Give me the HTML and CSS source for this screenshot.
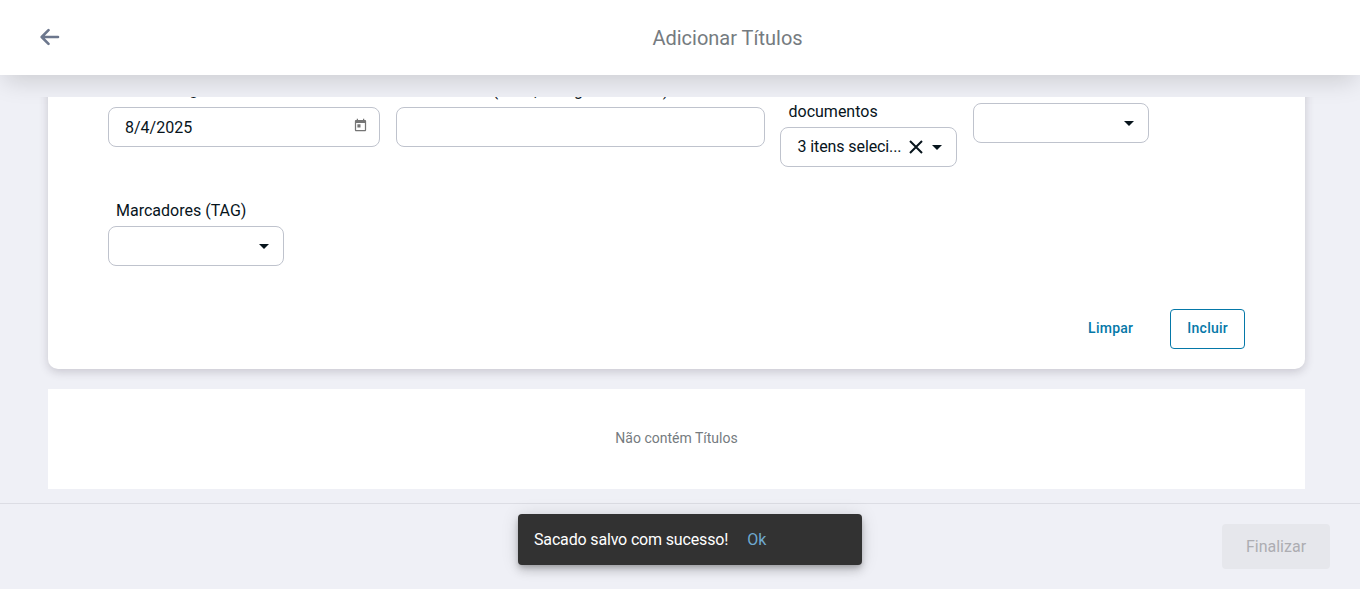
FILE: index.html
```html
<!DOCTYPE html>
<html lang="pt-BR">
<head>
<meta charset="utf-8">
<title>Adicionar Títulos</title>
<link rel="stylesheet" href="styles.css">
</head>
<body>
<div class="app">
  <header class="header">
    <svg class="back" viewBox="0 0 20 18"><path d="M18 9H2M8.5 2.2L1.7 9l6.8 6.8"/></svg>
    <h1 class="title">Adicionar Títulos</h1>
  </header>
  <main class="content">
    <section class="card">
      <div class="fields">
        <div class="field date">
          <label class="label">Data de registro</label>
          <div class="input"><span>8/4/2025</span>
            <svg class="calendar" viewBox="0 0 24 24"><path d="M19 3h-1V1h-2v2H8V1H6v2H5c-1.11 0-1.99.9-1.99 2L3 19c0 1.1.89 2 2 2h14c1.1 0 2-.9 2-2V5c0-1.1-.9-2-2-2zm0 16H5V8h14v11zM7 10h5v5H7z"/></svg>
          </div>
        </div>
        <div class="field ident">
          <label class="label"><span class="tight">Identificador</span> (Valor, Código de barras)</label>
          <div class="input"></div>
        </div>
        <div class="field docs">
          <label class="label">Tipos de documentos</label>
          <div class="input select"><span class="value">3 itens seleci...</span>
            <svg class="clear" viewBox="0 0 14 14"><path d="M1 1l12 12M13 1L1 13"/></svg>
            <svg class="caret" viewBox="0 0 10 5"><path d="M0 0h10L5 5z"/></svg>
          </div>
        </div>
        <div class="field category">
          <label class="label">Categoria</label>
          <div class="input select"><svg class="caret" viewBox="0 0 10 5"><path d="M0 0h10L5 5z"/></svg></div>
        </div>
      </div>
      <div class="field tags">
        <label class="label">Marcadores (TAG)</label>
        <div class="input select"><svg class="caret" viewBox="0 0 10 5"><path d="M0 0h10L5 5z"/></svg></div>
      </div>
      <div class="actions">
        <button class="button">Limpar</button>
        <button class="button outlined">Incluir</button>
      </div>
    </section>
    <section class="empty">Não contém Títulos</section>
  </main>
  <footer class="footer"><button class="finish" disabled>Finalizar</button></footer>
  <div class="snackbar"><span>Sacado salvo com sucesso!</span><a class="ok">Ok</a></div>
</div>
</body>
</html>
```
FILE: styles.css
```css
* { box-sizing: border-box; }
body { margin: 0; font-family: Roboto, sans-serif; font-size: 16px; color: #07141c; background: #eff0f6; }
button { font-family: inherit; }
.app { display: flex; flex-direction: column; height: 589px; position: relative; overflow: hidden; }
.header { display: flex; align-items: center; height: 75px; flex: none; padding-left: 40px; background: #fff; box-shadow: 0 10px 24px -4px rgba(0, 0, 0, .15); }
.back { width: 20px; height: 18px; flex: none; margin-top: -1px; fill: none; stroke: #6c778d; stroke-width: 2.6; stroke-linecap: round; stroke-linejoin: round; }
.title { flex: 1; margin: 0; padding-left: 35px; text-align: center; font-size: 20px; font-weight: 400; line-height: 28px; color: #757b80; }
.content { height: 406px; flex: none; margin-top: 22px; padding: 0 55px 0 48px; overflow: hidden; }
.card { height: 312px; margin-top: -40px; padding: 22px 60px 20px; display: flex; flex-direction: column; background: #fff; border-radius: 10px; box-shadow: 0 3px 10px rgba(50, 40, 60, .2); }
.fields { display: flex; align-items: flex-start; height: 121px; }
.field { display: flex; flex-direction: column; flex: none; }
.label { padding-left: 8px; line-height: 20px; margin-bottom: 6px; }
.input { display: flex; align-items: center; height: 40px; padding: 0 11.5px 0 16px; background: #fff; border: 1px solid #bfc3cd; border-radius: 8px; }
.date { width: 272px; margin-right: 16px; padding-top: 1px; }
.date .label { padding-left: 9px; margin-bottom: 7px; }
.ident { width: 369px; margin-right: 15px; padding-top: 2px; }
.tight { letter-spacing: -.4px; }
.docs { width: 177px; margin-right: 16px; margin-top: -4px; }
.docs .label { width: 110px; padding: 1px 0 0 8.5px; line-height: 24px; margin-bottom: 3px; }
.category { width: 176px; margin-top: -2px; }
.tags { width: 176px; }
.tags .label { margin: 1px 0 5px; }
.calendar { width: 15px; height: 15px; margin: -3px 0 0 auto; fill: #757575; }
.caret { width: 10px; height: 5px; margin-left: auto; fill: #07141c; }
.select { padding-right: 14.5px; }
.clear { width: 14px; height: 14px; margin-left: 8px; fill: none; stroke: #07141c; stroke-width: 2; }
.value { white-space: nowrap; letter-spacing: -.1px; padding: 0 0 2px .5px; }
.actions { display: flex; justify-content: flex-end; gap: 20px; margin-top: auto; }
.button { height: 40px; padding: 0 16px 2px; border: 1px solid transparent; border-radius: 4px; background: none; color: #0578a8; font-size: 14px; font-weight: 500; letter-spacing: .25px; }
.outlined { border-color: #0578a8; }
.empty { display: flex; align-items: center; justify-content: center; height: 100px; margin-top: 20px; padding-bottom: 2px; background: #fff; color: #757b80; font-size: 14px; }
.footer { display: flex; flex: 1; justify-content: flex-end; align-items: flex-start; padding: 20px 30px 0 0; border-top: 1px solid #dcdde4; }
.finish { width: 108px; height: 45px; border: 0; border-radius: 4px; background: #e6e7ec; color: #adadb2; font-size: 16px; }
.snackbar { position: absolute; left: 518px; top: 514px; display: flex; align-items: center; gap: 19px; width: 344px; height: 51px; padding: 0 16px; border-radius: 4px; background: #323232; color: #fff; letter-spacing: -.16px; box-shadow: 0 3px 5px -1px rgba(0,0,0,.2), 0 6px 10px rgba(0,0,0,.14), 0 1px 18px rgba(0,0,0,.12); }
.ok { color: #6fa9cf; letter-spacing: 0; }
```
